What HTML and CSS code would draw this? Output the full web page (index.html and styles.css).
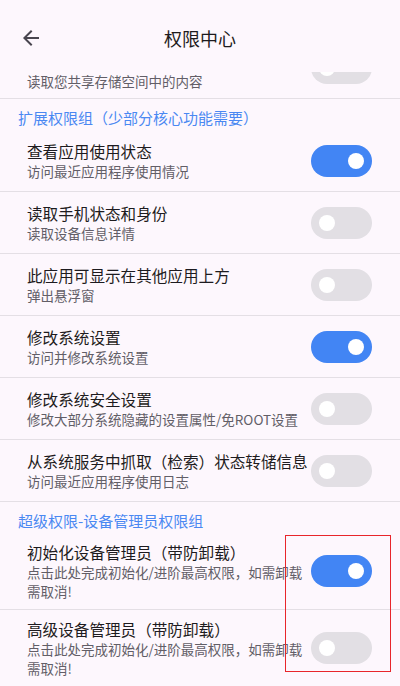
FILE: index.html
```html
<!DOCTYPE html>
<html lang="zh-CN">

<head>
    <meta charset="UTF-8">
    <meta name="viewport" content="width=device-width, initial-scale=1.0">
    <title>权限中心</title>
    <link rel="stylesheet" href="styles.css">
</head>

<body>
    <div id="screen">
        <div id="header">
            <div class="back">
                <svg width="24" height="24" viewBox="0 0 24 24">
                    <path d="M20 11H7.83l5.59-5.59L12 4l-8 8 8 8 1.41-1.41L7.83 13H20v-2z" fill="#49454f"/>
                </svg>
            </div>
            <h1>权限中心</h1>
            <div class="back"></div>
        </div>

        <div id="viewport">
            <div id="list">
                <!-- scrolled half out of view, only the second line shows -->
                <div class="item top">
                    <div class="text">
                        <div class="desc">读取您共享存储空间中的内容</div>
                    </div>
                    <div class="switch"></div>
                </div>

                <div class="group">扩展权限组（少部分核心功能需要）</div>
                <div class="item">
                    <div class="text">
                        <div class="title">查看应用使用状态</div>
                        <div class="desc">访问最近应用程序使用情况</div>
                    </div>
                    <div class="switch on"></div>
                </div>
                <div class="item">
                    <div class="text">
                        <div class="title">读取手机状态和身份</div>
                        <div class="desc">读取设备信息详情</div>
                    </div>
                    <div class="switch"></div>
                </div>
                <div class="item">
                    <div class="text">
                        <div class="title">此应用可显示在其他应用上方</div>
                        <div class="desc">弹出悬浮窗</div>
                    </div>
                    <div class="switch"></div>
                </div>
                <div class="item">
                    <div class="text">
                        <div class="title">修改系统设置</div>
                        <div class="desc">访问并修改系统设置</div>
                    </div>
                    <div class="switch on"></div>
                </div>
                <div class="item">
                    <div class="text">
                        <div class="title">修改系统安全设置</div>
                        <div class="desc">修改大部分系统隐藏的设置属性/免ROOT设置</div>
                    </div>
                    <div class="switch"></div>
                </div>
                <div class="item">
                    <div class="text">
                        <div class="title">从系统服务中抓取（检索）状态转储信息</div>
                        <div class="desc">访问最近应用程序使用日志</div>
                    </div>
                    <div class="switch"></div>
                </div>

                <div class="group">超级权限-设备管理员权限组</div>
                <div class="item">
                    <div class="text">
                        <div class="title">初始化设备管理员（带防卸载）</div>
                        <div class="desc">点击此处完成初始化/进阶最高权限，如需卸载需取消!</div>
                    </div>
                    <div class="switch on"></div>
                </div>
                <div class="item">
                    <div class="text">
                        <div class="title">高级设备管理员（带防卸载）</div>
                        <div class="desc">点击此处完成初始化/进阶最高权限，如需卸载需取消!</div>
                    </div>
                    <div class="switch"></div>
                </div>
            </div>
        </div>

        <div class="mark"></div>
    </div>
</body>

</html>
```

FILE: styles.css
```css
body {
    margin: 0;
    background-color: #fdf7fd;
    font-family: "Noto Sans CJK SC", "Noto Sans", sans-serif;
}

#screen {
    position: relative;
    width: 400px;
    height: 686px;
    overflow: hidden;
    display: flex;
    flex-direction: column;
}

#header {
    height: 72px;
    flex-shrink: 0;
    display: flex;
    align-items: center;
    padding: 4px 19px 0 19px;
    box-sizing: border-box;
    background-color: #fdf7fd;
    position: relative;
    z-index: 1;
}

#header h1 {
    flex: 1;
    margin: 0;
    text-align: center;
    font-size: 18px;
    font-weight: normal;
    color: #1d1b20;
}

.back {
    width: 24px;
    height: 24px;
}

#viewport {
    flex: 1;
    overflow: hidden;
}

/* list is scrolled a bit, first row is half hidden under the header */
#list {
    margin-top: -35px;
}

.group {
    padding: 9px 18px 2px 18px;
    line-height: 20px;
    font-size: 15px;
    color: #4a88f2;
}

.item {
    display: flex;
    align-items: center;
    min-height: 62px;
    box-sizing: border-box;
    padding: 8px 28px 8px 27px;
    border-bottom: 1px solid #e4dfe5;
}

.item.top .text {
    padding-top: 26px;
}

.item.top .desc {
    line-height: 16px;
}

.text {
    flex: 1;
}

.title {
    font-size: 15.6px;
    line-height: 22px;
    color: #1d1b20;
    white-space: nowrap;
}

.desc {
    font-size: 13.5px;
    line-height: 19px;
    color: #625e67;
}

.switch {
    position: relative;
    flex-shrink: 0;
    width: 61px;
    height: 32px;
    border-radius: 16px;
    background-color: #e2dfe4;
}

.switch::after {
    content: "";
    position: absolute;
    top: 8px;
    left: 8px;
    width: 16px;
    height: 16px;
    border-radius: 50%;
    background-color: white;
}

.switch.on {
    background-color: #4285f4;
}

.switch.on::after {
    left: 37px;
}

.mark {
    position: absolute;
    left: 285px;
    top: 535px;
    width: 104px;
    height: 135px;
    border: 1.5px solid #e8262b;
}
```
